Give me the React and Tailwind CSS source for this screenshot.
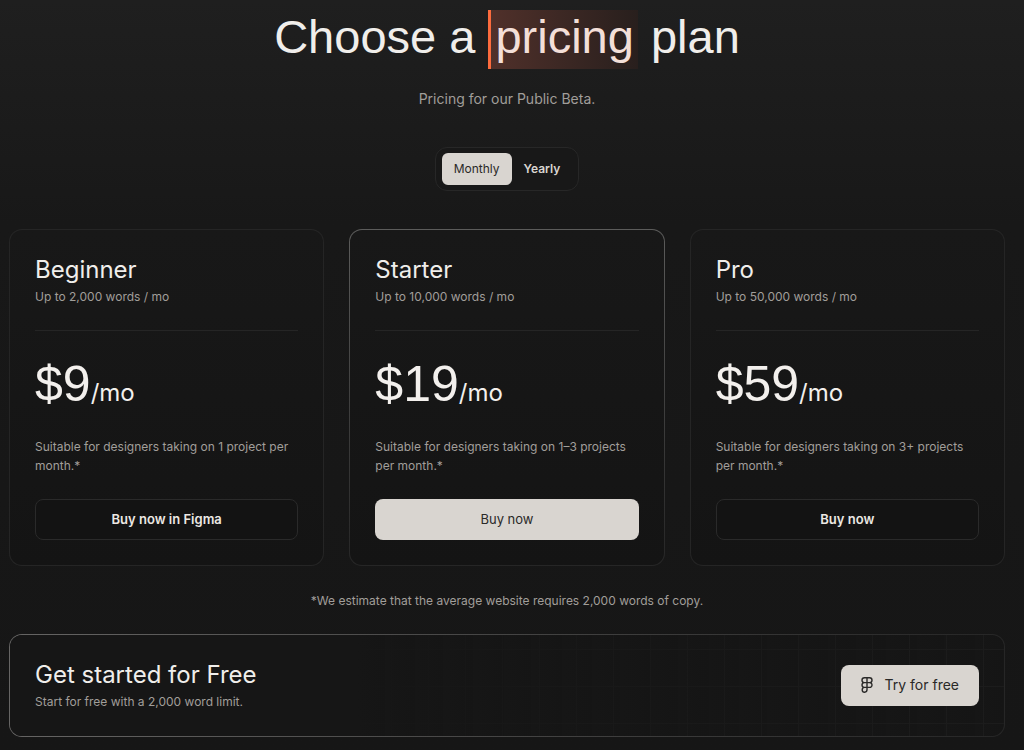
import React, { useState } from "react";

const plans = [
  {
    name: "Beginner",
    words: "Up to 2,000 words / mo",
    price: "$9",
    text: "Suitable for designers taking on 1 project per month.*",
    action: "Buy now in Figma",
  },
  {
    name: "Starter",
    words: "Up to 10,000 words / mo",
    price: "$19",
    text: "Suitable for designers taking on 1–3 projects per month.*",
    action: "Buy now",
    featured: true,
  },
  {
    name: "Pro",
    words: "Up to 50,000 words / mo",
    price: "$59",
    text: "Suitable for designers taking on 3+ projects per month.*",
    action: "Buy now",
  },
];

function FigmaIcon() {
  return (
    <svg
      aria-hidden="true"
      viewBox="0 0 12 16"
      className="h-4 w-3 shrink-0"
      fill="none"
      stroke="currentColor"
      strokeWidth="1.4"
    >
      <path d="M6 .8H3.4a2.4 2.4 0 0 0 0 4.8H6zM6 .8h2.6a2.4 2.4 0 0 1 0 4.8H6zM6 5.6H3.4a2.4 2.4 0 0 0 0 4.8H6zM6 5.6h2.6a2.4 2.4 0 1 1 0 4.8H6zM6 10.4H3.4A2.4 2.4 0 1 0 6 12.8z" />
    </svg>
  );
}

function BillingToggle() {
  const [period, setPeriod] = useState("Monthly");
  return (
    <div className="flex rounded-xl border border-[#272727] bg-[#181818] px-1.5 py-[5px]">
      {["Monthly", "Yearly"].map((name) => (
        <button
          key={name}
          type="button"
          aria-pressed={period === name}
          onClick={() => setPeriod(name)}
          className={
            period === name
              ? "h-8 rounded-md bg-[#d9d5d0] px-3 text-xs text-[#2a2928]"
              : "h-8 rounded-md px-3 text-xs font-semibold text-[#d9d5d0]"
          }
        >
          {name}
        </button>
      ))}
    </div>
  );
}

function PlanCard({ plan }) {
  return (
    <article
      className={
        plan.featured
          ? "rounded-[13px] bg-linear-to-b from-[#5c5c5b] to-[#262626] p-px"
          : "rounded-[13px] bg-[#252525] p-px"
      }
    >
      <div className="flex h-full flex-col rounded-xl bg-linear-to-b from-[#181818] to-[#141414] px-[25px] pt-6 pb-[25px]">
        <h2 className="text-2xl leading-8 text-[#f0eeeb]">{plan.name}</h2>
        <p className="mt-0.5 text-xs leading-[18px] text-[#a19e9a]">{plan.words}</p>
        <hr className="mt-6 border-t border-[#252525]" />
        <p className="mt-6 text-[#f3f0ed]">
          <span className="font-[Liberation_Sans,sans-serif] text-[50px] leading-[58px]">{plan.price}</span>
          <span className="text-2xl leading-8">/mo</span>
        </p>
        <p className="mt-6 text-xs leading-[19px] text-[#a19e9a]">{plan.text}</p>
        <button
          type="button"
          className={
            plan.featured
              ? "mt-6 h-[41px] rounded-lg bg-[#d9d5d0] text-[13px] text-[#2a2928]"
              : "mt-6 h-[41px] rounded-lg border border-[#2a2a2a] bg-[#131313] text-[13px] font-semibold text-[#ece8e3]"
          }
        >
          {plan.action}
        </button>
      </div>
    </article>
  );
}

export default function App() {
  return (
    <main className="min-h-screen bg-linear-to-b from-[#1f1f1f] via-[#181818] via-30% to-[#161616] pt-[10px] pr-[19px] pb-[13px] pl-[9px] font-[Inter,sans-serif]">
      <header className="flex flex-col items-center">
        <h1 className="font-[Liberation_Sans,sans-serif] text-[47px] leading-[53px] text-[#f0eeeb]">
          Choose a{" "}
          <span className="inline-block border-l-3 border-[#fd6b3d] bg-linear-to-r from-[#50302a] to-[#281f1d] px-1 pb-1.5 text-[#f3dfd8]">
            pricing
          </span>{" "}
          plan
        </h1>
        <p className="mt-5 text-sm leading-5 text-[#a19e9a]">Pricing for our Public Beta.</p>
        <div className="mt-[38px]">
          <BillingToggle />
        </div>
      </header>

      <section aria-label="Plans" className="mt-[38px] grid grid-cols-3 gap-[25px]">
        {plans.map((plan) => (
          <PlanCard key={plan.name} plan={plan} />
        ))}
      </section>

      <p className="mt-[26px] text-center text-xs leading-[18px] text-[#a19e9a]">
        *We estimate that the average website requires 2,000 words of copy.
      </p>

      <section className="mt-6 rounded-[13px] bg-linear-to-r from-[#666564] to-[#262626] p-px">
        <div className="rounded-xl bg-[#161616]">
          <div className="flex items-center justify-between rounded-xl bg-[linear-gradient(to_right,#161616_35%,transparent),linear-gradient(to_right,#1c1c1c_1px,transparent_1px),linear-gradient(to_bottom,#1c1c1c_1px,transparent_1px)] bg-size-[100%_100%,37px_37px,37px_37px] bg-position-[0_0,right_21px_top_14px,right_21px_top_14px] px-[25px] pt-6 pb-[25px]">
            <div>
              <h2 className="text-2xl leading-8 text-[#f0eeeb]">Get started for Free</h2>
              <p className="mt-0.5 text-xs leading-[18px] text-[#a19e9a]">Start for free with a 2,000 word limit.</p>
            </div>
            <button
              type="button"
              className="flex h-[41px] items-center gap-3 rounded-lg bg-[#d9d5d0] px-5 text-sm text-[#2a2928]"
            >
              <FigmaIcon />
              Try for free
            </button>
          </div>
        </div>
      </section>
    </main>
  );
}
